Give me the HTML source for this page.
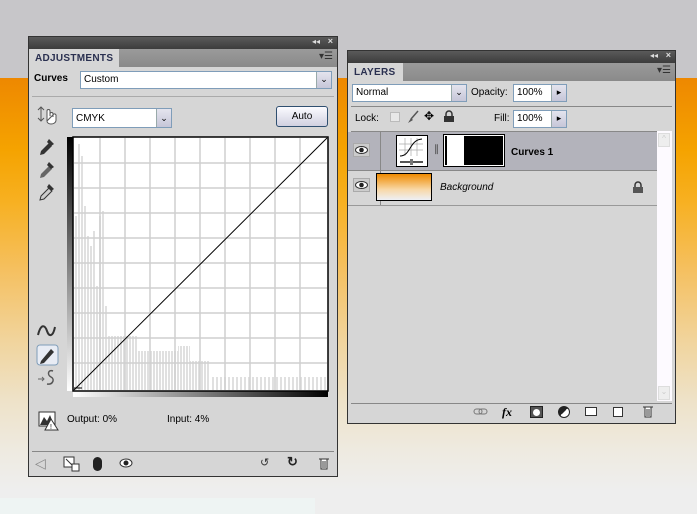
<!DOCTYPE html>
<html><head><meta charset="utf-8"><style>
*{margin:0;padding:0;box-sizing:border-box}
body{width:697px;height:514px;overflow:hidden;position:relative;font-family:"Liberation Sans",sans-serif;font-size:10px;color:#000;
background:linear-gradient(to bottom,#c7c6c9 0,#c7c6c9 78px,#ee8800 78px,#f5a300 150px,#f7b020 200px,#f5c060 270px,#f1d49c 340px,#eee2c8 400px,#eeeae0 450px,#eeeeee 490px,#eeeeee 514px)}
.a{position:absolute}
.panel{position:absolute;background:#d6d6d6;border:1px solid #333}
.tb{position:absolute;left:0;right:0;top:0;height:12px;background:linear-gradient(#5a5a5a,#3c3c3c)}
.tabrow{position:absolute;left:0;right:0;background:linear-gradient(#9a9a9a,#8a8a8a)}
.tab{position:absolute;left:0;top:0;bottom:0;background:#d6d6d6;font-weight:bold;color:#2a3050;font-size:10px;padding:4px 6px;letter-spacing:.3px}
.inp{position:absolute;background:#fff;border:1px solid #7f9db9;font-size:10px;padding:2px 3px}
.dd{position:absolute;right:0;top:0;bottom:0;width:15px;background:linear-gradient(#e4e4ee,#c6c6d8);border-left:1px solid #9aa;text-align:center;font-size:9px;line-height:15px}
.sep{position:absolute;height:1px;background:#888}
</style></head><body>
<div class="a" style="left:0;top:498px;width:315px;height:16px;background:#eef4f3"></div>

<!-- ADJUSTMENTS -->
<div class="panel" style="left:28px;top:36px;width:310px;height:441px">
 <div class="tb"><span class="a" style="right:17px;top:0;color:#ddd;font-size:8px">◂◂</span><span class="a" style="right:4px;top:-1px;color:#ddd;font-size:9px;font-weight:bold">×</span></div>
 <div class="tabrow" style="top:12px;height:18px"><div class="tab" style="width:90px">ADJUSTMENTS</div><span class="a" style="right:4px;top:2px;font-size:10px;color:#333">▾☰</span></div>
 <div class="a" style="left:5px;top:36px;font-weight:bold;font-size:10px">Curves</div>
 <div class="inp" style="left:51px;top:34px;width:252px;height:18px">Custom<div class="dd">⌄</div></div>
 <div class="sep" style="left:3px;right:3px;top:59px;background:#aaa"></div>
 <svg class="a" style="left:8px;top:68px" width="22" height="20"><path d="M4 2V16M1 5L4 2L7 5M1 13L4 16L7 13" stroke="#555" fill="none"/><path d="M10 16V6a1.5 1.5 0 0 1 3 0V11M13 9a1.5 1.5 0 0 1 3 0V12M16 10a1.5 1.5 0 0 1 3 1V15C19 18 16 19 14 19C12 19 10 18 10 16Z" fill="#fff" stroke="#555"/></svg>
 <div class="inp" style="left:43px;top:71px;width:100px;height:20px;padding-top:4px">CMYK<div class="dd" style="line-height:18px">⌄</div></div>
 <div class="a" style="left:247px;top:69px;width:52px;height:21px;border:1px solid #2f4f70;border-radius:3px;background:linear-gradient(#fbfbff,#d0d0e0);text-align:center;line-height:19px;font-size:10px">Auto</div>
 <svg class="a" style="left:8px;top:100px" width="20" height="70"><g fill="#333"><path d="M4 14 L12 6 L15 9 L7 17 L3 18Z"/><path d="M12 2 L17 7 L14 9 L10 5Z"/><path d="M4 37 L12 29 L15 32 L7 40 L3 41Z" fill="#666"/><path d="M12 25 L17 30 L14 32 L10 28Z"/><path d="M4 59 L12 51 L15 54 L7 62 L3 63Z" fill="#ccc" stroke="#333"/><path d="M12 47 L17 52 L14 54 L10 50Z"/></g></svg>
 <svg class="a" style="left:6px;top:284px" width="24" height="70"><path d="M3 14 C6 2 10 4 12 10 S18 16 20 6" stroke="#333" stroke-width="2" fill="none"/><rect x="2" y="24" width="21" height="20" rx="3" fill="#e8ecf4" stroke="#7f9db9"/><path d="M6 40 L16 28 L19 31 L9 42 L5 43Z" fill="#333"/><path d="M3 58H9M7 56L9 58L7 60" stroke="#666" fill="none"/><path d="M18 50C13 48 12 54 16 56S18 64 12 63" stroke="#555" stroke-width="1.5" fill="none"/></svg>
 <!-- graph -->
 <div class="a" style="left:38px;top:100px;width:6px;height:254px;background:linear-gradient(#000,#fff)"></div>
 <div class="a" style="left:44px;top:354px;width:255px;height:6px;background:linear-gradient(to right,#fff,#000)"></div>
 <svg class="a" style="left:43px;top:99px" width="257" height="256">
  <defs><pattern id="st" width="3" height="10" patternUnits="userSpaceOnUse"><rect width="2" height="10" fill="#e0e0e0"/></pattern>
  <pattern id="st2" width="4" height="10" patternUnits="userSpaceOnUse"><rect width="2" height="10" fill="#e0e0e0"/></pattern></defs>
  <rect x="1" y="1" width="255" height="254" fill="#fff" stroke="#000" stroke-width="1.5"/>
  <g fill="url(#st)">
   <rect x="3" y="80" width="3" height="174"/><rect x="6" y="8" width="3" height="246"/><rect x="9" y="20" width="3" height="234"/>
   <rect x="12" y="70" width="3" height="184"/><rect x="15" y="100" width="3" height="154"/><rect x="18" y="110" width="3" height="144"/>
   <rect x="21" y="95" width="3" height="159"/><rect x="24" y="150" width="3" height="104"/><rect x="27" y="80" width="3" height="174"/>
   <rect x="30" y="75" width="3" height="179"/><rect x="33" y="170" width="3" height="84"/>
   <rect x="36" y="200" width="30" height="54"/><rect x="66" y="215" width="40" height="39"/><rect x="106" y="210" width="12" height="44"/>
   <rect x="118" y="225" width="20" height="29"/>
  </g>
  <rect x="138" y="241" width="117" height="13" fill="url(#st2)"/>
  <g stroke="#cfcfcf" stroke-width="1.5">
   <path d="M28 2V254M53 2V254M78 2V254M103 2V254M128 2V254M153 2V254M178 2V254M203 2V254M228 2V254"/>
   <path d="M2 27H255M2 52H255M2 77H255M2 102H255M2 127H255M2 152H255M2 177H255M2 202H255M2 227H255"/>
  </g>
  <path d="M2 254L255 2" stroke="#000" stroke-width="1"/>
  <path d="M2 252H10" stroke="#000"/>
 </svg>
 <svg class="a" style="left:9px;top:374px" width="22" height="20"><rect x="1" y="1" width="16" height="14" fill="#fff" stroke="#333"/><path d="M2 14 L6 6 L9 10 L12 4 L16 14Z" fill="#333"/><path d="M13 8 L20 19 L7 19Z" fill="#fff" stroke="#333"/><text x="12" y="18" font-size="7">!</text></svg>
 <div class="a" style="left:38px;top:377px">Output: 0%</div>
 <div class="a" style="left:138px;top:377px">Input: 4%</div>
 <div class="sep" style="left:3px;right:3px;top:414px"></div>
 <div class="a" style="left:6px;top:418px;font-size:14px;color:#888">◁</div>
 <svg class="a" style="left:34px;top:419px" width="18" height="16"><rect x="1" y="1" width="10" height="10" fill="#fff" stroke="#333"/><rect x="9" y="8" width="7" height="7" fill="#fff" stroke="#333"/><path d="M3 3L9 9" stroke="#333"/></svg>
 <div class="a" style="left:64px;top:420px;width:9px;height:14px;background:#222;border-radius:5px"></div>
 <svg class="a" style="left:90px;top:421px" width="14" height="10"><ellipse cx="7" cy="5" rx="6" ry="4" fill="#fff" stroke="#333"/><circle cx="7" cy="5" r="2.5" fill="#222"/></svg>
 <div class="a" style="left:231px;top:419px;font-size:11px;color:#333">↺</div>
 <div class="a" style="left:258px;top:417px;font-size:13px;font-weight:bold;color:#222">↻</div>
 <svg class="a" style="left:289px;top:420px" width="12" height="13"><path d="M1 2H11M3 2V12H9V2" fill="#fff" stroke="#333"/><path d="M5 4V11M7 4V11" stroke="#333"/></svg>
</div>

<!-- LAYERS -->
<div class="panel" style="left:347px;top:50px;width:329px;height:374px">
 <div class="tb"><span class="a" style="right:17px;top:0;color:#ddd;font-size:8px">◂◂</span><span class="a" style="right:4px;top:-1px;color:#ddd;font-size:9px;font-weight:bold">×</span></div>
 <div class="tabrow" style="top:12px;height:18px"><div class="tab" style="width:55px">LAYERS</div><span class="a" style="right:4px;top:2px;font-size:10px;color:#333">▾☰</span></div>
 <div class="inp" style="left:4px;top:33px;width:115px;height:18px">Normal<div class="dd">⌄</div></div>
 <div class="a" style="left:123px;top:36px">Opacity:</div>
 <div class="inp" style="left:165px;top:33px;width:54px;height:18px">100%<div class="dd">▸</div></div>
 <div class="sep" style="left:3px;right:3px;top:55px"></div>
 <div class="a" style="left:7px;top:62px">Lock:</div>
 <div class="a" style="left:42px;top:61px;width:10px;height:10px;border:1px solid #bbb;background:#e8e8e8"></div>
 <svg class="a" style="left:58px;top:59px" width="14" height="14"><path d="M12 1L5 9" stroke="#555" stroke-width="1.5"/><path d="M5 8L2 13L7 10Z" fill="#555"/></svg>
 <div class="a" style="left:76px;top:58px;font-size:12px">✥</div>
 <svg class="a" style="left:95px;top:59px" width="12" height="13"><path d="M3 6V4a3 3 0 0 1 6 0V6" stroke="#333" fill="none" stroke-width="1.5"/><rect x="1" y="6" width="10" height="6" fill="#333"/></svg>
 <div class="a" style="left:146px;top:62px">Fill:</div>
 <div class="inp" style="left:165px;top:59px;width:54px;height:18px">100%<div class="dd">▸</div></div>
 <div class="sep" style="left:3px;right:3px;top:80px"></div>
 <div class="a" style="left:0;top:81px;width:310px;height:38px;background:#b3b3bb"></div>
 <div class="a" style="left:32px;top:81px;width:1px;height:73px;background:#888"></div>
 <svg class="a" style="left:5px;top:92px" width="18" height="15"><rect x=".5" y=".5" width="16" height="13" fill="#ccc" stroke="#aaa"/><ellipse cx="8.5" cy="7" rx="6" ry="3.5" fill="#fff" stroke="#333"/><circle cx="8.5" cy="7" r="2.3" fill="#222"/></svg>
 <div class="a" style="left:48px;top:84px;width:32px;height:32px;background:#fff;border:1px solid #000"><svg width="30" height="30"><g stroke="#aaa" stroke-width=".7"><path d="M8 2V20M14 2V20M20 2V20M2 8H26M2 14H26"/></g><path d="M3 20C14 20 12 4 25 3" stroke="#000" fill="none"/><path d="M3 26H26" stroke="#555" stroke-width="2"/><rect x="13" y="23" width="3" height="6" fill="#777"/></svg></div>
 <div class="a" style="left:86px;top:93px;font-size:10px;color:#444">∥</div>
 <div class="a" style="left:96px;top:84px;width:60px;height:31px;background:#000;border:1px solid #fff;outline:1px solid #000"><div style="width:17px;height:100%;background:#fff;margin-left:2px"></div></div>
 <div class="a" style="left:163px;top:96px;font-weight:bold;font-size:10px">Curves 1</div>
 <div class="sep" style="left:0;right:18px;top:119px"></div>
 <svg class="a" style="left:5px;top:127px" width="18" height="15"><rect x=".5" y=".5" width="16" height="13" fill="#ccc" stroke="#aaa"/><ellipse cx="8.5" cy="7" rx="6" ry="3.5" fill="#fff" stroke="#333"/><circle cx="8.5" cy="7" r="2.3" fill="#222"/></svg>
 <div class="a" style="left:28px;top:122px;width:56px;height:28px;border:1px solid #000;background:linear-gradient(#ef8a00,#f8d8a8 60%,#eef0f6)"></div>
 <div class="a" style="left:92px;top:131px;font-style:italic">Background</div>
 <svg class="a" style="left:284px;top:130px" width="12" height="13"><path d="M3 6V4a3 3 0 0 1 6 0V6" stroke="#333" fill="none" stroke-width="1.5"/><rect x="1" y="6" width="10" height="6" fill="#555"/></svg>
 <div class="sep" style="left:0;right:18px;top:154px;background:#999"></div>
 <div class="a" style="left:309px;top:80px;width:15px;height:270px;background:#fdfaff"></div>
 <div class="a" style="left:310px;top:82px;width:12px;height:14px;border:1px solid #ddd;background:#eee;color:#ccc;text-align:center;font-size:8px">^</div>
 <div class="a" style="left:310px;top:335px;width:12px;height:14px;border:1px solid #ddd;background:#eee;color:#ccc;text-align:center;font-size:8px">⌄</div>
 <div class="sep" style="left:3px;right:3px;top:352px"></div>
 <svg class="a" style="left:125px;top:357px" width="16" height="8"><rect x="1" y="1" width="8" height="5" rx="2.5" fill="none" stroke="#777"/><rect x="6" y="1" width="8" height="5" rx="2.5" fill="none" stroke="#777"/></svg>
 <div class="a" style="left:154px;top:354px;font-style:italic;font-family:'Liberation Serif',serif;font-size:12px;font-weight:bold">fx</div>
 <div class="a" style="left:182px;top:355px;width:13px;height:12px;background:#555;border:1px solid #222"><div style="width:7px;height:7px;margin:2px;background:#fff;border-radius:4px"></div></div>
 <div class="a" style="left:210px;top:355px;width:12px;height:12px;border-radius:6px;background:linear-gradient(135deg,#222 50%,#fff 50%);border:1px solid #222"></div>
 <div class="a" style="left:237px;top:356px;width:12px;height:9px;border:1px solid #333;background:#fff"></div>
 <div class="a" style="left:265px;top:356px;width:10px;height:10px;border:1px solid #333;background:#fff"></div>
 <svg class="a" style="left:294px;top:354px" width="12" height="13"><path d="M1 2H11M3 2V12H9V2" fill="#fff" stroke="#333"/><path d="M5 4V11M7 4V11" stroke="#333"/></svg>
</div>
</body></html>
